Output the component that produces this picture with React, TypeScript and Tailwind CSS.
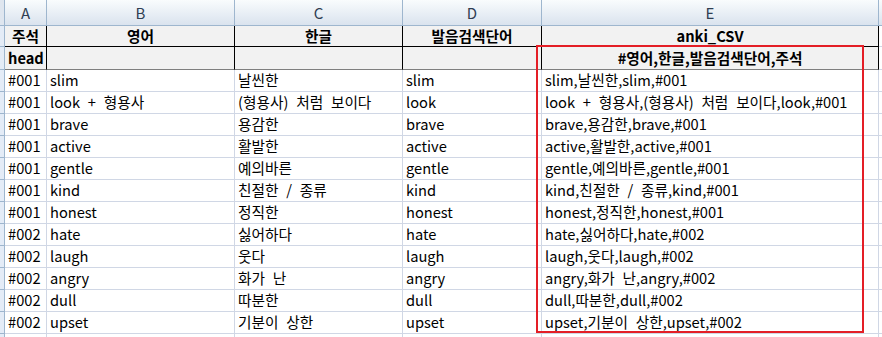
import React from "react";

const data: [string, string, string, string][] = [
  ["#001", "slim", "날씬한", "slim"],
  ["#001", "look + 형용사", "(형용사) 처럼 보이다", "look"],
  ["#001", "brave", "용감한", "brave"],
  ["#001", "active", "활발한", "active"],
  ["#001", "gentle", "예의바른", "gentle"],
  ["#001", "kind", "친절한 / 종류", "kind"],
  ["#001", "honest", "정직한", "honest"],
  ["#002", "hate", "싫어하다", "hate"],
  ["#002", "laugh", "웃다", "laugh"],
  ["#002", "angry", "화가 난", "angry"],
  ["#002", "dull", "따분한", "dull"],
  ["#002", "upset", "기분이 상한", "upset"],
];

const W = ["w-[5px]", "w-[42px]", "w-[188px]", "w-[168px]", "w-[139px]", "w-[337px]"];

function DataRow({ cells, h = "h-[22px]" }: { cells: string[]; h?: string }) {
  return (
    <div className={`flex ${h} shrink-0`}>
      <div className={`${W[0]} shrink-0 border-r border-b border-[#9eb6ce] bg-[#e4ecf7]`} />
      {cells.map((c, i) => (
        <div
          key={i}
          className={`${W[i + 1]} shrink-0 border-r border-b border-[#d0d7e5] pl-[3px] flex items-center whitespace-nowrap overflow-hidden`}
        >
          {c}
        </div>
      ))}
      <div className="flex-1 border-b border-[#d0d7e5]" />
    </div>
  );
}

export default function App() {
  const letters = ["A", "B", "C", "D", "E"];
  const labels = ["주석", "영어", "한글", "발음검색단어", "anki_CSV"];
  return (
    <div
      className="relative w-[882px] h-[337px] overflow-hidden bg-white text-black text-[14.67px] leading-none [word-spacing:4.5px]"
      style={{ fontFamily: '"Noto Sans CJK KR", "Noto Sans", sans-serif' }}
    >
      {/* column header */}
      <div className="flex h-[26px] bg-linear-to-b from-[#f9fcfd] to-[#dae3ee] border-b border-[#9eb6ce]">
        <div className={`${W[0]} shrink-0 border-r border-[#9eb6ce] bg-[#dfe6ef]`} />
        {letters.map((l, i) => (
          <div
            key={l}
            className={`${W[i + 1]} shrink-0 border-r border-[#9eb6ce] flex items-center justify-center text-[15px] text-[#2f3e52]`}
          >
            {l}
          </div>
        ))}
        <div className="flex-1" />
      </div>
      {/* row 1 */}
      <div className="flex h-[21px] font-bold">
        <div className={`${W[0]} shrink-0 border-r border-b border-[#9eb6ce] bg-[#e4ecf7]`} />
        {labels.map((l, i) => (
          <div
            key={l}
            className={`${W[i + 1]} shrink-0 border-r border-b border-black bg-[#f2f2f2] flex items-center justify-center whitespace-nowrap`}
          >
            {l}
          </div>
        ))}
        <div className="flex-1 border-b border-[#d0d7e5]" />
      </div>
      {/* row 2 */}
      <div className="flex h-[23px] font-bold">
        <div className={`${W[0]} shrink-0 border-r border-b border-[#9eb6ce] bg-[#e4ecf7]`} />
        <div className={`${W[1]} shrink-0 border-r border-b border-r-black border-b-[#7f7f7f] bg-[#f2f2f2] pl-[3px] flex items-center`}>
          head
        </div>
        <div className={`${W[2]} shrink-0 border-r border-b border-r-black border-b-[#7f7f7f] bg-[#f2f2f2]`} />
        <div className={`${W[3]} shrink-0 border-r border-b border-r-black border-b-[#7f7f7f] bg-[#f2f2f2]`} />
        <div className={`${W[4]} shrink-0 border-r border-b border-r-black border-b-[#7f7f7f] bg-[#f2f2f2]`} />
        <div className={`${W[5]} shrink-0 border-r border-b border-r-black border-b-[#7f7f7f] bg-[#f2f2f2] flex items-center justify-center whitespace-nowrap`}>
          #영어,한글,발음검색단어,주석
        </div>
        <div className="flex-1 border-b border-[#d0d7e5]" />
      </div>
      {data.map((r, i) => (
        <DataRow key={i} cells={[r[0], r[1], r[2], r[3], `${r[1]},${r[2]},${r[3]},${r[0]}`]} />
      ))}
      <DataRow cells={["", "", "", "", ""]} />
      {/* red highlight box */}
      <div className="absolute left-[536px] top-[45px] w-[328px] h-[288px] border-2 border-[#e41e26] pointer-events-none" />
    </div>
  );
}
